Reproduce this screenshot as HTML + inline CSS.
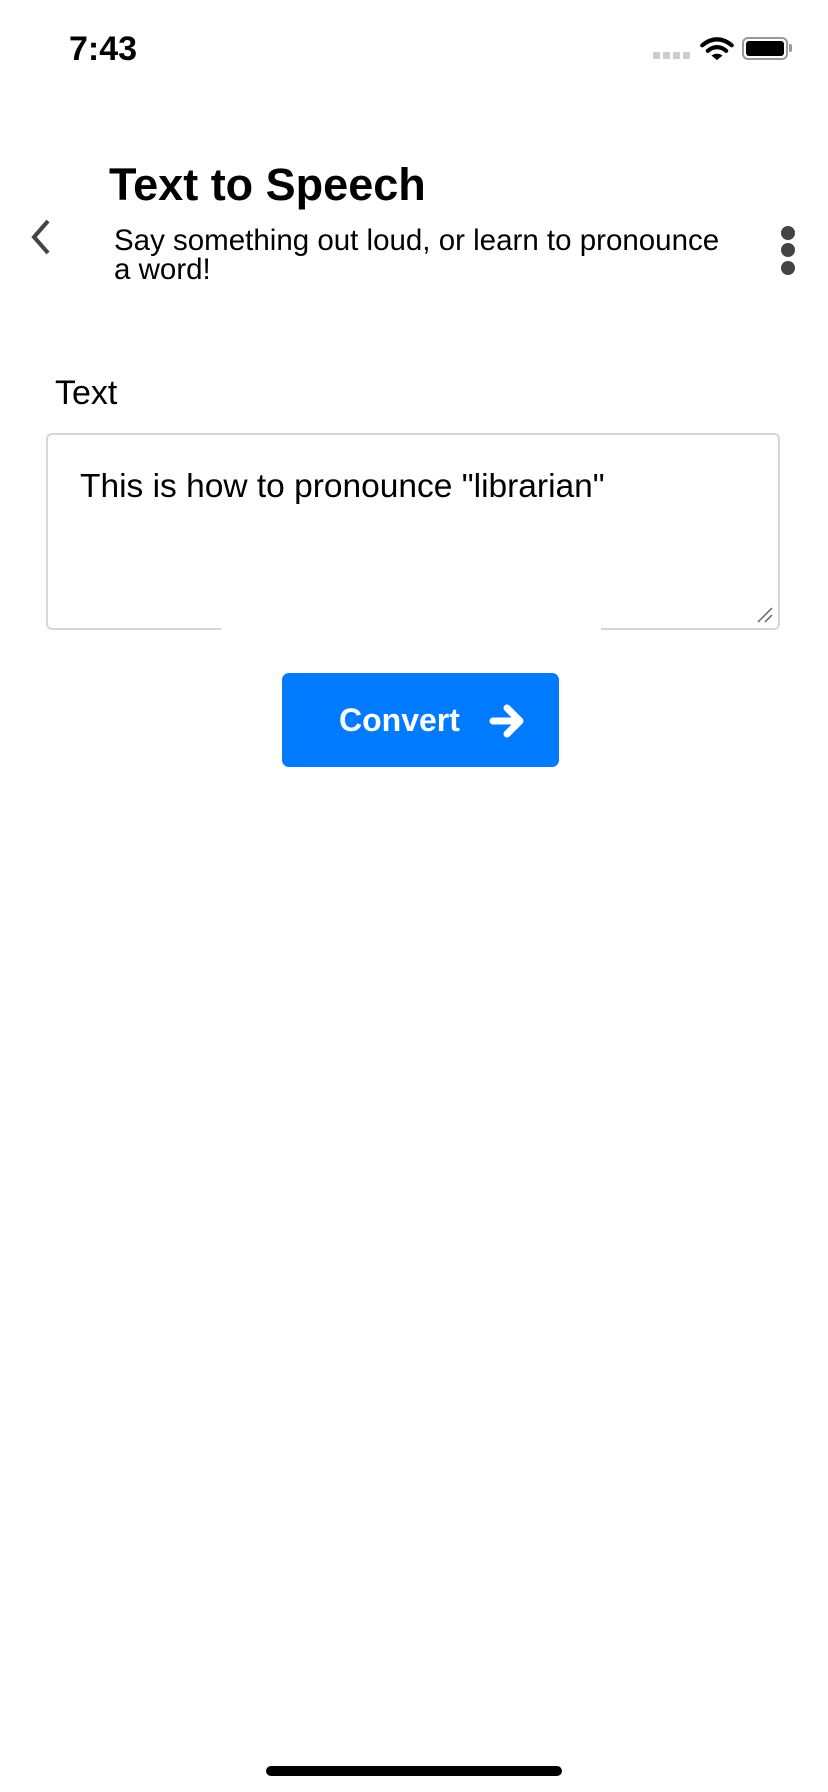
<!DOCTYPE html>
<html><head><meta charset="utf-8"><style>
body{margin:0;width:828px;height:1792px;background:#fff;position:relative;overflow:hidden;font-family:"Liberation Sans",sans-serif;color:#000}
.a{position:absolute;white-space:nowrap}
</style></head><body>
<div class="a" style="left:69px;top:30px;font-size:34px;font-weight:bold;">7:43</div>
<div class="a" style="left:653px;top:46px;">
<span style="display:inline-block;width:7px;height:7px;background:#ccc;border-radius:1px;margin-right:3px"></span><span style="display:inline-block;width:7px;height:7px;background:#ccc;border-radius:1px;margin-right:3px"></span><span style="display:inline-block;width:7px;height:7px;background:#ccc;border-radius:1px;margin-right:3px"></span><span style="display:inline-block;width:7px;height:7px;background:#ccc;border-radius:1px"></span></div>
<svg class="a" style="left:700px;top:37px" width="34" height="24" viewBox="0 0 36 26">
<path d="M2 9 Q18 -4 34 9" stroke="#000" stroke-width="4.5" fill="none" stroke-linecap="round"/>
<path d="M8 15 Q18 7 28 15" stroke="#000" stroke-width="4.5" fill="none" stroke-linecap="round"/>
<path d="M12 20 L18 25 L24 20 Q18 16 12 20Z" fill="#000"/></svg>
<div class="a" style="left:742px;top:37px;width:42px;height:19px;border:2px solid #999;border-radius:6px;"></div>
<div class="a" style="left:746px;top:41px;width:38px;height:15px;background:#000;border-radius:3px;"></div>
<div class="a" style="left:789px;top:44px;width:3px;height:8px;background:#999;border-radius:0 2px 2px 0"></div>
<svg class="a" style="left:24px;top:217px" width="30" height="40"><path d="M24 4 L10 20 L24 36" stroke="#444" stroke-width="4" fill="none"/></svg>
<div class="a" style="left:109px;top:159px;font-size:45px;font-weight:bold;">Text to Speech</div>
<div class="a" style="left:114px;top:226px;font-size:29.5px;line-height:29px;">Say something out loud, or learn to pronounce<br>a word!</div>
<div class="a" style="left:781px;top:226px;width:14px;height:14px;border-radius:50%;background:#444"></div>
<div class="a" style="left:781px;top:243px;width:14px;height:14px;border-radius:50%;background:#444"></div>
<div class="a" style="left:781px;top:261px;width:14px;height:14px;border-radius:50%;background:#444"></div>
<div class="a" style="left:55px;top:374px;font-size:34px;">Text</div>
<div class="a" style="left:46px;top:433px;width:730px;height:193px;border:2px solid #d6d6d6;border-radius:6px;"></div>
<div class="a" style="left:221px;top:620px;width:380px;height:10px;background:#fff"></div>
<svg class="a" style="left:756px;top:606px" width="18" height="18"><path d="M2 16 L16 2 M9 16 L16 9" stroke="#666" stroke-width="1.5"/></svg>
<div class="a" style="left:80px;top:468px;font-size:33.5px;">This is how to pronounce "librarian"</div>
<div class="a" style="left:282px;top:673px;width:277px;height:94px;background:#007aff;border-radius:7px;"></div>
<div class="a" style="left:339px;top:702px;font-size:32px;font-weight:bold;color:#fff;">Convert</div>
<svg class="a" style="left:489px;top:703px" width="38" height="36"><path d="M4 18 H30 M18 5 L31 18 L18 31" stroke="#fff" stroke-width="7" fill="none" stroke-linecap="round" stroke-linejoin="round"/></svg>
<div class="a" style="left:266px;top:1766px;width:296px;height:10px;background:#000;border-radius:5px;"></div>
</body></html>
